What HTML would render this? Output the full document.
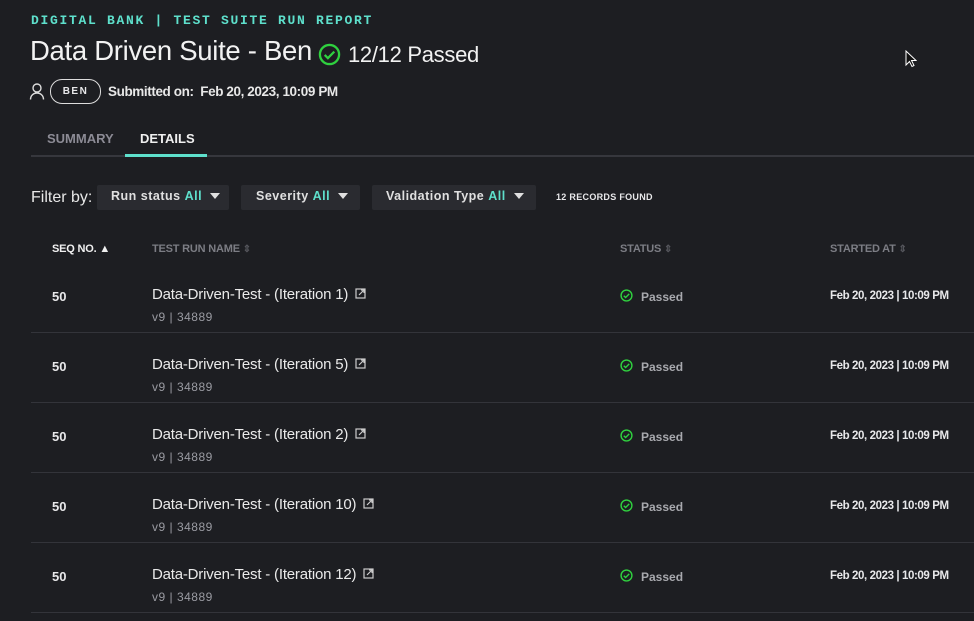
<!DOCTYPE html><html><head><style>
body{margin:0;width:974px;height:621px;background:#1d1e22;overflow:hidden;font-family:"Liberation Sans",sans-serif;color:#e8e8ea;position:relative}
.a{position:absolute;white-space:nowrap}
.mono{font-family:"Liberation Mono",monospace;font-weight:bold;color:#5ee0cc}
.f{position:absolute;top:185px;height:25px;background:#2a2b30;border-radius:2px;font-size:12.5px;font-weight:bold;letter-spacing:.5px;line-height:23px;color:#e0e0e0}
.f b{color:#5ee0cc}
.car{display:inline-block;width:0;height:0;border-left:5px solid transparent;border-right:5px solid transparent;border-top:6px solid #e0e0e0;margin-left:8px;vertical-align:1px}
.h{font-size:11px;font-weight:bold;color:#7c7d84;top:243px;letter-spacing:-.2px}
.row{position:absolute;left:31px;width:943px;height:70px;border-bottom:1px solid #33343a}
.row span{position:absolute;white-space:nowrap}
</style></head><body>
<div class="a mono" style="left:31px;top:13px;font-size:13px;letter-spacing:1.7px">DIGITAL BANK | TEST SUITE RUN REPORT</div>
<div class="a" style="left:30px;top:35px;font-size:27.5px;letter-spacing:-.3px;color:#f2f2f2">Data Driven Suite - Ben</div>
<svg class="a" style="left:318px;top:43px" width="23" height="23" viewBox="0 0 24 24"><circle cx="12" cy="12" r="10" fill="none" stroke="#2fd13f" stroke-width="2.4"/><path d="M7 12.5l3.3 3.3L17 9" fill="none" stroke="#2fd13f" stroke-width="2.4"/></svg>
<div class="a" style="left:348px;top:42px;font-size:22px;letter-spacing:-.3px;color:#f2f2f2">12/12 Passed</div>
<svg class="a" style="left:29px;top:83px" width="16" height="17" viewBox="0 0 16 17"><circle cx="8" cy="5" r="4" fill="none" stroke="#ddd" stroke-width="1.4"/><path d="M1.5 16.5c0-4 3-6.5 6.5-6.5s6.5 2.5 6.5 6.5" fill="none" stroke="#ddd" stroke-width="1.4"/></svg>
<div class="a" style="left:50px;top:79px;width:49px;height:23px;border:1.5px solid #ddd;border-radius:12px;text-align:center;line-height:23px;font-size:10px;font-weight:bold;letter-spacing:1.5px">BEN</div>
<div class="a" style="left:108px;top:84px;font-size:13.5px;font-weight:bold;letter-spacing:-.4px;color:#e8e8e8">Submitted on:&nbsp; Feb 20, 2023, 10:09 PM</div>
<div class="a" style="left:47px;top:131px;font-size:13px;font-weight:bold;color:#8c8b95">SUMMARY</div>
<div class="a" style="left:140px;top:131px;font-size:13px;font-weight:bold;color:#f0f0f0">DETAILS</div>
<div class="a" style="left:31px;top:155px;width:943px;height:2px;background:#36373d"></div>
<div class="a" style="left:125px;top:154px;width:82px;height:3px;background:#5ee0cc"></div>
<div class="a" style="left:31px;top:189px;font-size:16px;color:#e8e8e8">Filter by:</div>
<div class="f" style="left:97px;width:132px;padding-left:14px;box-sizing:border-box">Run status <b>All</b><span class="car"></span></div>
<div class="f" style="left:241px;width:119px;padding-left:15px;box-sizing:border-box">Severity <b>All</b><span class="car"></span></div>
<div class="f" style="left:372px;width:164px;padding-left:14px;box-sizing:border-box">Validation Type <b>All</b><span class="car"></span></div>
<div class="a" style="left:556px;top:192px;font-size:9px;font-weight:bold;letter-spacing:.3px">12 RECORDS FOUND</div>
<div class="a h" style="left:52px;color:#f0f0f0">SEQ NO. <span style="font-size:11px">▲</span></div>
<div class="a h" style="left:152px">TEST RUN NAME <span style="font-size:10px;color:#55565c">⇕</span></div>
<div class="a h" style="left:620px">STATUS <span style="font-size:10px;color:#55565c">⇕</span></div>
<div class="a h" style="left:830px">STARTED AT <span style="font-size:10px;color:#55565c">⇕</span></div>
<div id="rows"></div>
<script>
var n=[1,5,2,10,12],h='';
n.forEach(function(k,i){var t=262+i*70;
h+='<div class="row" style="top:'+t+'px"><span style="left:21px;top:27px;font-size:13px;font-weight:bold">50</span>'+
'<span style="left:121px;top:24px;font-size:15px;letter-spacing:-.2px;color:#eaeaea">Data-Driven-Test - (Iteration '+k+') <svg width="11" height="11" viewBox="0 0 11 11" style="margin-left:3px"><rect x="1" y="1" width="9" height="9" fill="none" stroke="#ccc" stroke-width="1.2"/><path d="M4 7L9 2M6 2h3v3" fill="none" stroke="#ccc" stroke-width="1.2"/></svg></span>'+
'<span style="left:121px;top:48px;font-size:12px;color:#9a9ba2;letter-spacing:.5px">v9 | 34889</span>'+
'<span style="left:589px;top:27px"><svg width="13" height="13" viewBox="0 0 24 24"><circle cx="12" cy="12" r="10" fill="none" stroke="#2fd13f" stroke-width="2.6"/><path d="M7 12.5l3.3 3.3L17 9" fill="none" stroke="#2fd13f" stroke-width="2.6"/></svg></span>'+
'<span style="left:610px;top:28px;font-size:12px;font-weight:bold;color:#a8a9ae">Passed</span>'+
'<span style="left:799px;top:28px;font-size:11.5px;font-weight:bold;letter-spacing:-.4px">Feb 20, 2023 | 10:09 PM</span></div>';});
document.getElementById('rows').innerHTML=h;
</script>
<svg class="a" style="left:905px;top:50px" width="12" height="18" viewBox="0 0 12 18"><path d="M1 1v14l3.5-3.5 2.5 5 2-1-2.5-5H11z" fill="#111" stroke="#fff" stroke-width="1"/></svg>
</body></html>
